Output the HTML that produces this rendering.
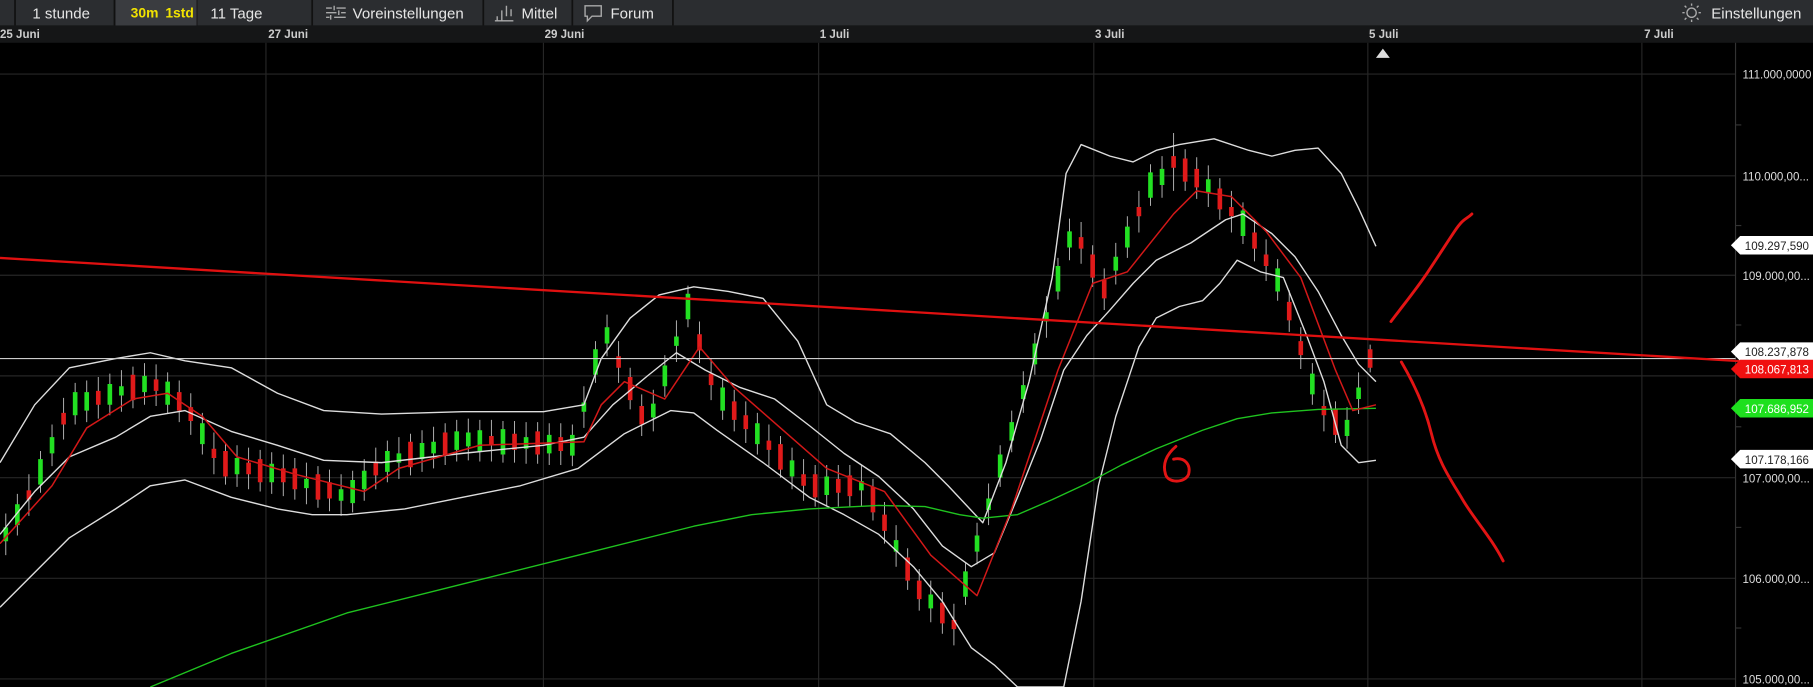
<!DOCTYPE html>
<html><head><meta charset="utf-8"><style>
html,body{margin:0;padding:0;background:#000;overflow:hidden}
svg{display:block}
text{font-family:"Liberation Sans",sans-serif}
</style></head><body>
<svg width="1813" height="687" viewBox="0 0 1568 594" preserveAspectRatio="none" xmlns="http://www.w3.org/2000/svg">
<rect width="1568" height="594" fill="#000"/>
<rect x="0" y="0" width="1568" height="22" fill="#2b2d30"/>
<rect x="0" y="22" width="1568" height="15" fill="#151617"/>
<g stroke="#111" stroke-width="1.5">
<line x1="13" y1="0" x2="13" y2="22"/><line x1="99" y1="0" x2="99" y2="22"/><line x1="170" y1="0" x2="170" y2="22"/>
<line x1="270" y1="0" x2="270" y2="22"/><line x1="418" y1="0" x2="418" y2="22"/><line x1="495" y1="0" x2="495" y2="22"/><line x1="582" y1="0" x2="582" y2="22"/>
</g>
<rect x="100" y="0" width="70" height="22" fill="#3a3c40"/>
<g font-size="13" fill="#e6e6e6">
<text x="28" y="16">1 stunde</text>
<text x="182" y="16">11 Tage</text>
<text x="305" y="16">Voreinstellungen</text>
<text x="451" y="16">Mittel</text>
<text x="528" y="16">Forum</text>
<text x="1480" y="16">Einstellungen</text>
</g>
<g font-size="12" font-weight="bold" fill="#f2e300">
<text x="113" y="15">30m</text><text x="143" y="15">1std</text>
</g>
<g stroke="#aaa" stroke-width="1.2" fill="none">
<path d="M282 7h5M291 7h8M282 11h9M295 11h4M282 15h3M289 15h10M289 5v4M293 9v4M286 13v4"/>
<path d="M430 14v4M434 9v9M438 5v9M442 8v6M428 18h16"/>
<path d="M506 5h14v9h-8l-4 4v-4h-2z"/>
<circle cx="1463" cy="11" r="4"/>
<path d="M1463 3v2M1463 17v2M1455 11h2M1469 11h2M1457 5l1.5 1.5M1467.5 15.5l1.5 1.5M1457 17l1.5-1.5M1467.5 6.5l1.5-1.5"/>
</g>
<g font-size="10" fill="#ccc" font-weight="bold">
<text x="0" y="33">25 Juni</text><text x="232" y="33">27 Juni</text><text x="471" y="33">29 Juni</text>
<text x="709" y="33">1 Juli</text><text x="947" y="33">3 Juli</text><text x="1184" y="33">5 Juli</text><text x="1422" y="33">7 Juli</text>
</g>
<g stroke="#262626" stroke-width="1">
<line x1="230" y1="37" x2="230" y2="594"/><line x1="470" y1="37" x2="470" y2="594"/><line x1="708" y1="37" x2="708" y2="594"/>
<line x1="946" y1="37" x2="946" y2="594"/><line x1="1183" y1="37" x2="1183" y2="594"/><line x1="1420" y1="37" x2="1420" y2="594"/>
<line x1="0" y1="64" x2="1501" y2="64"/><line x1="0" y1="152" x2="1501" y2="152"/><line x1="0" y1="238" x2="1501" y2="238"/>
<line x1="0" y1="325" x2="1501" y2="325"/><line x1="0" y1="413" x2="1501" y2="413"/><line x1="0" y1="500" x2="1501" y2="500"/><line x1="0" y1="587" x2="1501" y2="587"/>
</g>
<line x1="1501" y1="37" x2="1501" y2="594" stroke="#333"/>
<g stroke="#333"><line x1="1501" y1="108" x2="1506" y2="108"/><line x1="1501" y1="195" x2="1506" y2="195"/><line x1="1501" y1="281" x2="1506" y2="281"/><line x1="1501" y1="369" x2="1506" y2="369"/><line x1="1501" y1="456" x2="1506" y2="456"/><line x1="1501" y1="543" x2="1506" y2="543"/></g>
<path d="M1190 50l6-8 6 8z" fill="#ddd"/>
<!-- wicks -->
<path fill="none" stroke="#bbb" stroke-width="0.8" d="M5 444V480M15 427V463M25 410V446M35 390V426M45 367V403M55 344V380M65 331V367M75 329V365M85 326V362M95 323V359M105 320V356M115 317V353M125 314V350M135 315V351M145 322V358M155 329V365M165 340V376M175 357V393M185 374V410M195 383V419M205 385V421M215 387V423M225 389V425M235 391V427M245 393V429M255 396V432M265 400V436M275 403V439M285 406V442M295 410V446M305 407V443M315 397V433M325 387V423M335 381V417M345 378V414M355 375V411M365 372V408M375 369V405M385 366V402M395 363V399M405 362V398M415 363V399M425 363V399M435 364V400M445 364V400M455 365V401M465 365V401M475 366V402M485 366V402M495 367V403M505 334V370M515 295V331M525 272V308M535 295V331M545 318V354M555 341V377M565 337V373M575 307V343M585 277V313M595 247V283M605 278V314M615 310V346M625 327V363M635 337V373M645 347V383M655 357V393M665 367V403M675 377V413M685 387V423M695 397V433M705 402V438M715 402V438M725 402V438M735 402V438M745 402V438M755 414V450M765 434V470M775 454V490M785 474V510M795 492V528M805 502V538M815 512V548M825 522V558M835 487V523M845 452V488M855 418V454M865 385V421M875 355V391M885 321V357M895 288V324M905 256V292M915 223V259M925 189V225M935 192V228M945 212V248M955 232V268M965 210V246M975 187V223M985 165V201M995 142V178M1005 135V171M1015 115V165M1025 129V165M1035 136V172M1045 143V179M1055 154V190M1065 165V201M1075 175V211M1085 190V226M1095 207V243M1105 224V260M1115 251V287M1125 283V319M1135 314V350M1145 337V373M1155 347V383M1165 352V388M1175 322V358M1185 298V322"/>
<!-- green bodies -->
<path fill="none" stroke="#22e022" stroke-width="4" d="M5 456V468M15 436V454M35 397V419M45 378V392M65 339V359M75 339V355M95 332V350M105 334V342M125 325V339M145 330V350M175 366V384M205 396V410M235 401V417M265 414V422M295 423V433M305 415V435M315 407V423M335 390V408M345 392V400M365 383V397M375 382V392M395 373V389M405 374V386M415 372V390M435 371V393M455 378V388M475 376V392M495 376V394M505 348V356M515 302V324M525 283V297M565 349V361M575 316V334M585 291V299M595 254V276M625 335V355M655 366V384M685 398V412M715 412V428M745 416V424M775 467V477M805 514V526M835 494V516M845 463V477M855 431V441M865 393V413M875 365V381M885 333V345M895 297V315M905 270V278M915 230V252M925 200V214M965 222V234M975 196V214M995 149V171M1005 146V160M1045 155V167M1075 182V204M1105 232V252M1135 323V341M1165 363V377M1175 335V345"/>
<!-- red bodies -->
<path fill="none" stroke="#e01a1a" stroke-width="4" d="M25 424V432M55 357V367M85 338V350M115 324V346M135 328V338M155 339V355M165 352V364M185 388V396M195 390V412M215 400V410M225 397V417M245 405V417M255 405V423M275 410V432M285 417V431M325 399V411M355 382V404M385 374V394M425 377V385M445 375V389M465 373V393M485 378V390M535 308V318M545 326V346M555 351V367M605 289V303M615 323V333M635 347V363M645 359V371M665 381V389M675 384V406M695 410V420M705 410V430M725 414V426M735 411V429M755 421V443M765 445V459M785 482V502M795 502V518M815 521V539M825 536V544M935 205V215M945 220V240M955 242V258M985 179V187M1015 135V145M1025 137V157M1035 146V162M1055 163V181M1065 179V187M1085 201V215M1095 220V230M1115 261V277M1125 295V307M1145 351V359M1155 354V376M1185 302V318"/>
<g fill="none" stroke-linejoin="round">
<polyline stroke="#ddd" stroke-width="1.2" points="0,400 30,350 60,318 100,310 130,305 160,312 200,318 240,340 280,355 330,358 400,356 470,356 505,350 520,310 545,275 570,255 600,248 630,252 660,258 690,295 715,350 740,365 770,375 800,400 820,420 850,452 870,400 890,330 910,240 922,150 935,125 960,135 980,140 1000,130 1020,125 1050,120 1080,130 1100,135 1120,130 1140,128 1160,150 1175,180 1190,213"/>
<polyline stroke="#ddd" stroke-width="1.2" points="0,525 30,495 60,465 100,440 130,420 160,415 200,430 240,440 270,445 300,445 350,440 400,430 450,420 500,405 540,375 580,355 600,357 620,372 660,400 700,430 730,445 760,462 790,490 815,520 840,560 860,575 880,594 920,594 935,520 950,420 965,360 985,300 1000,275 1020,265 1040,260 1055,245 1070,225 1090,235 1110,240 1130,290 1145,330 1160,385 1175,400 1190,398"/>
<polyline stroke="#ddd" stroke-width="1.2" points="0,462 30,425 60,395 100,378 130,360 160,355 200,373 240,385 280,398 330,400 400,392 470,385 505,378 530,350 560,325 585,305 610,320 640,335 670,345 700,368 730,392 760,412 790,440 815,472 840,490 860,478 880,430 900,380 920,320 940,290 960,268 980,245 1000,225 1030,210 1060,190 1075,185 1100,202 1120,222 1140,252 1160,290 1175,315 1190,330"/>
<polyline stroke="#1fc31f" stroke-width="1.2" points="130,594 200,565 300,530 400,505 500,480 600,455 650,445 700,440 760,437 800,438 830,445 850,448 880,445 910,432 940,418 970,402 1000,388 1040,372 1070,362 1100,357 1140,354 1190,353"/>
<polyline stroke="#d21818" stroke-width="1.3" points="0,470 45,420 75,370 115,345 145,340 175,360 205,395 255,410 315,425 345,405 415,385 505,382 520,350 540,330 575,345 605,300 635,335 675,370 715,405 765,425 805,480 845,515 875,440 915,320 945,245 975,235 1015,185 1035,165 1065,170 1095,200 1125,240 1155,320 1170,355 1190,350"/>
</g>
<line x1="0" y1="310" x2="1501" y2="310" stroke="#ccc" stroke-width="1"/>
<line x1="0" y1="223" x2="1501" y2="312" stroke="#e01010" stroke-width="2"/>
<line x1="1501" y1="312" x2="1568" y2="316" stroke="#e01010" stroke-width="2"/>
<g fill="none" stroke="#e21414" stroke-width="2.5" stroke-linecap="round">
<path d="M1203 278C1215 262 1225 250 1235 235S1250 212 1258 200S1268 190 1273 185"/>
<path d="M1212 313C1222 330 1232 350 1238 375S1255 415 1265 432S1290 465 1300 485"/>
<path d="M1017 386C1010 392 1005 400 1008 410C1010 418 1025 418 1028 410C1030 402 1025 395 1015 397"/>
</g>
<g font-size="10" fill="#ddd">
<text x="1507" y="68">111.000,0000</text><text x="1507" y="156">110.000,00...</text><text x="1507" y="242">109.000,00...</text>
<text x="1507" y="417">107.000,00...</text><text x="1507" y="504">106.000,00...</text><text x="1507" y="591">105.000,00...</text>
</g>
<g font-size="10">
<path d="M1497 212l8-8h63v16h-63z" fill="#fff"/><text x="1509" y="216" fill="#222">109.297,590</text>
<path d="M1497 304l8-8h63v16h-63z" fill="#fff"/><text x="1509" y="308" fill="#222">108.237,878</text>
<path d="M1497 319l8-8h63v16h-63z" fill="#f01010"/><text x="1509" y="323" fill="#fff">108.067,813</text>
<path d="M1497 353l8-8h63v16h-63z" fill="#1ee01e"/><text x="1509" y="357" fill="#fff">107.686,952</text>
<path d="M1497 397l8-8h63v16h-63z" fill="#fff"/><text x="1509" y="401" fill="#222">107.178,166</text>
</g>
</svg>
</body></html>
